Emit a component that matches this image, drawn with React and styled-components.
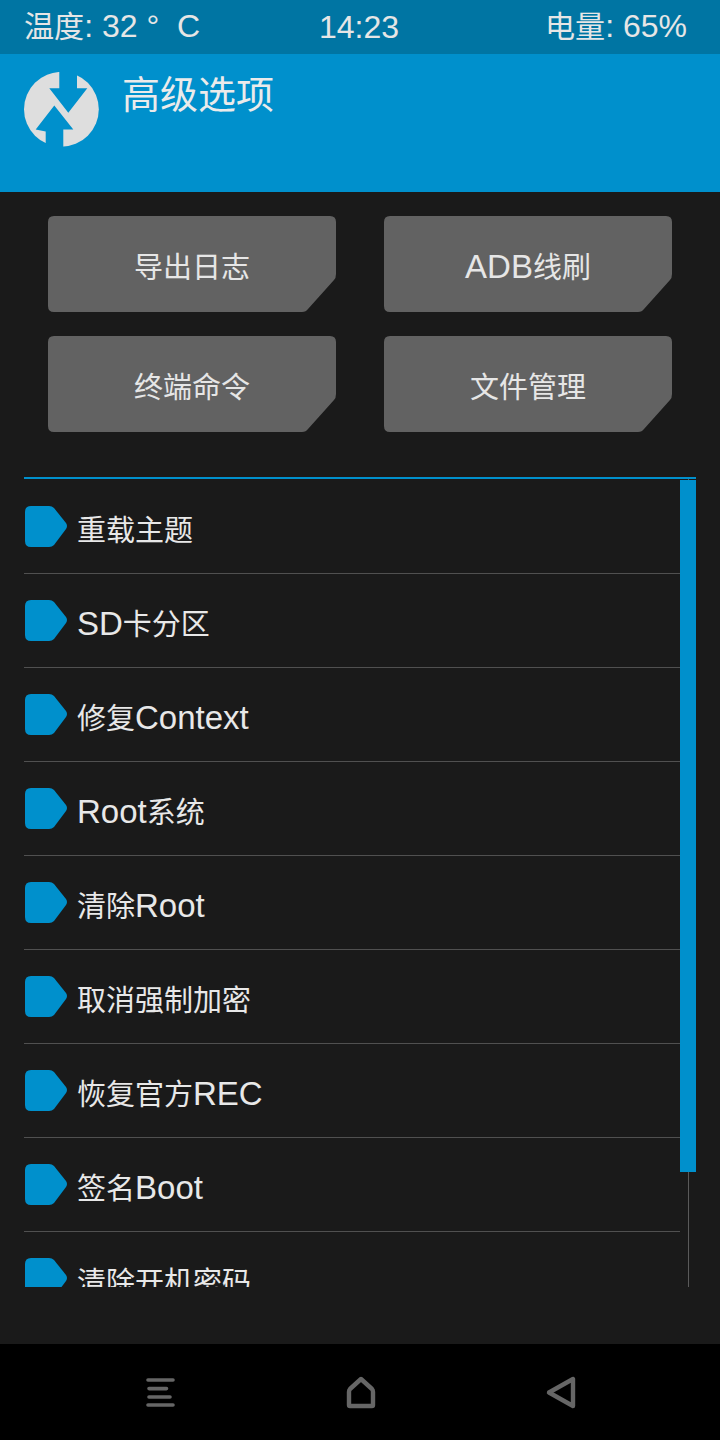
import React from "react";
import styled, { createGlobalStyle } from "styled-components";

const Global = createGlobalStyle`
  html, body { margin: 0; padding: 0; background: #1a1a1a; }
  * { box-sizing: border-box; }
`;
const Page = styled.div`
  width: 720px; height: 1440px; background: #1a1a1a; display: flex; flex-direction: column; overflow: hidden;
  font-family: "Liberation Sans", "Noto Sans CJK SC", sans-serif; color: #e6e6e6;
`;
const StatusBar = styled.div`
  height: 54px; background: #0075a3; padding: 0 33px 2px 24px; display: grid; grid-template-columns: 295px auto 1fr;
  align-items: center; font-size: 32px; line-height: 52px; white-space: pre;
`;
const StatusRight = styled.span` text-align: right; `;
const Cjk = styled.span` font-size: ${(p) => p.$size}em; `;
const Header = styled.header`
  height: 138px; background: #0090cc; padding: 18px 24px 0; display: flex; align-items: flex-start; gap: 22px;
`;
const Title = styled.h1`
  margin: 0; font-size: 38px; font-weight: 400; line-height: 46px; color: #ebebeb;
`;
const Actions = styled.div`
  padding: 24px 48px 45px; display: grid; grid-template-columns: 288px 288px; grid-auto-rows: 96px; gap: 24px 48px;
`;
const ActionButton = styled.button`
  border: 0; padding: 2px 0 0; background: #626262; color: #e6e6e6; font: inherit; font-size: 33px;
  clip-path: path("M6 0H282Q288 0 288 6V58Q288 62 286 64L260 93Q258 96 254 96H6Q0 96 0 90V6Q0 0 6 0Z");
`;
const ListFrame = styled.div`
  position: relative; margin: 0 24px; height: 810px; padding-top: 1px; border-top: 2px solid #0090cc; overflow: hidden; flex: none;
`;
const Row = styled.div`
  height: 94px; width: 656px; border-bottom: 1px solid #505050; display: flex; align-items: flex-start; gap: 10px; padding: 26px 0 0 1px;
`;
const RowLabel = styled.span`
  font-size: 33px; line-height: 46px; color: #e8e8e8; margin-top: 1px;
`;
const Tag = styled.svg` width: 42px; height: 41px; flex: none; display: block; `;
const ScrollTrack = styled.div`
  position: absolute; top: 0; right: 7px; width: 1px; bottom: 0; background: #5a5a5a;
`;
const ScrollThumb = styled.div`
  position: absolute; top: 1px; right: 0; width: 16px; height: 692px; background: #0090cc;
`;
const Spacer = styled.div` flex: 1; `;
const Nav = styled.nav`
  height: 96px; background: #000; display: grid; grid-template-columns: repeat(3, 1fr); padding: 0 60px; place-items: center;
`;
const NavIcon = styled.svg` width: 36px; height: 36px; display: block; fill: none; stroke: #666; stroke-width: 4.4; stroke-linejoin: round; stroke-linecap: round; `;

const items = ["重载主题", "SD卡分区", "修复Context", "Root系统", "清除Root", "取消强制加密", "恢复官方REC", "签名Boot", "清除开机密码"];
const actions = ["导出日志", "ADB线刷", "终端命令", "文件管理"];

const Mixed = ({ text, size = 0.879 }) =>
  text.split(/([\u4e00-\u9fff]+)/).map((part, i) =>
    i % 2 ? <Cjk key={i} $size={size}>{part}</Cjk> : part
  );

const Logo = () => (
  <svg width="76" height="76" viewBox="24 72 76 76" style={{ flex: "none", display: "block" }} aria-hidden="true">
    <circle cx="61.4" cy="109.3" r="37.4" fill="#dedede" />
    <path d="M59.3 70H77V88.3H87.3L68.3 112.7L49.3 88.3H59.3Z" fill="#0090cc" />
    <path d="M54.3 105.500L73.3 129.500H63.300V150H45.700V131.500L35.700 129.500Z" fill="#0090cc" />
  </svg>
);

export default function App() {
  return (
    <Page>
      <Global />
      <StatusBar>
        <span><Mixed text="温度" size={0.94} />: 32 °  C</span>
        <span>14:23</span>
        <StatusRight><Mixed text="电量" size={0.94} />: 65%</StatusRight>
      </StatusBar>
      <Header>
        <Logo />
        <Title>高级选项</Title>
      </Header>
      <Actions>
        {actions.map((a) => <ActionButton key={a}><Mixed text={a} /></ActionButton>)}
      </Actions>
      <ListFrame>
        {items.map((t) => (
          <Row key={t}>
            <Tag viewBox="0 0 42 41" aria-hidden="true">
              <path d="M6 0H24Q27 0 29 2L41 17Q43 20 41 23L29 39Q27 41 24 41H6Q0 41 0 35V6Q0 0 6 0Z" fill="#0090cc" />
            </Tag>
            <RowLabel><Mixed text={t} /></RowLabel>
          </Row>
        ))}
        <ScrollTrack />
        <ScrollThumb />
      </ListFrame>
      <Spacer />
      <Nav>
        <NavIcon viewBox="0 0 36 36" aria-hidden="true">
          <path d="M6 6H31M7 14.600H24.500M7 23H28M6 31H31" strokeWidth="3.6" />
        </NavIcon>
        <NavIcon viewBox="0 0 36 36" aria-hidden="true">
          <path d="M19 5L30 15Q31 16 31 18V31Q31 32 30 32H8Q7 32 7 31V18Q7 16 8 15Z" />
        </NavIcon>
        <NavIcon viewBox="0 0 36 36" aria-hidden="true">
          <path d="M31 5V32L7 18.500Z" />
        </NavIcon>
      </Nav>
    </Page>
  );
}
